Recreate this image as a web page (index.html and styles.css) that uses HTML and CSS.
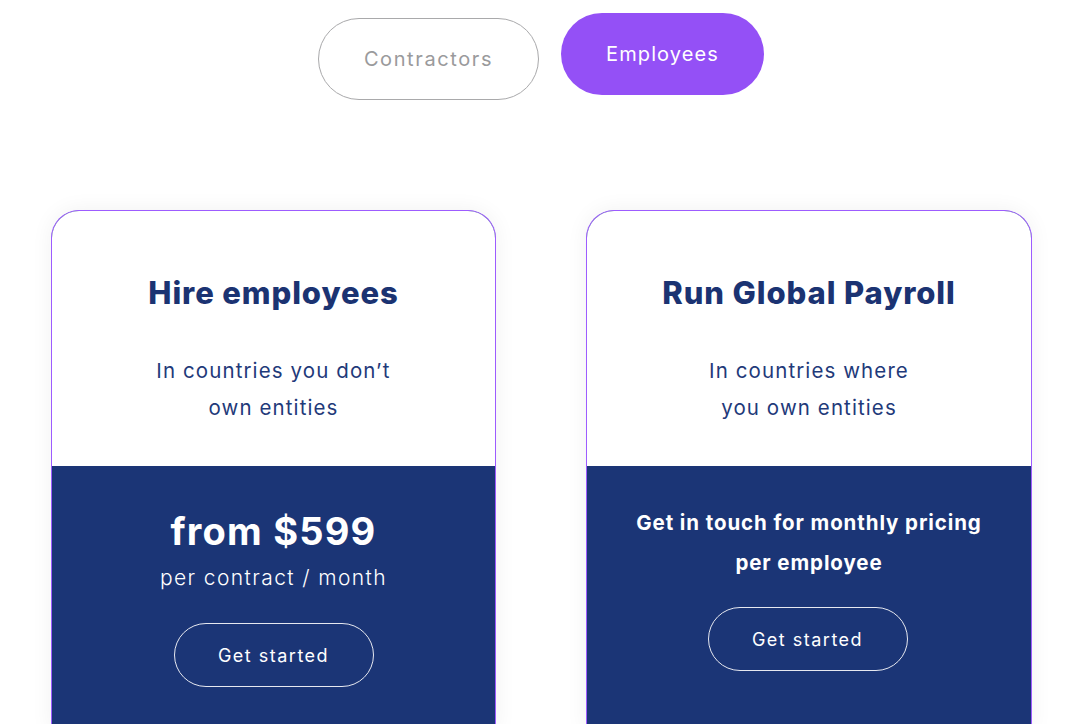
FILE: index.html
```html
<!DOCTYPE html>
<html lang="en">
<head>
<meta charset="utf-8">
<title>Pricing</title>
<link rel="stylesheet" href="styles.css">
</head>
<body>
<div class="toggle">
  <button class="tab tab-off">Contractors</button>
  <button class="tab tab-on">Employees</button>
</div>
<div class="cards">
  <div class="card">
    <div class="card-top">
      <h2 class="card-title">Hire employees</h2>
      <p class="card-sub">In countries you don’t<br>own entities</p>
    </div>
    <div class="card-bottom">
      <div class="price">from $599</div>
      <div class="price-unit">per contract / month</div>
      <button class="cta">Get started</button>
    </div>
  </div>
  <div class="card card-right">
    <div class="card-top">
      <h2 class="card-title">Run Global Payroll</h2>
      <p class="card-sub">In countries where<br>you own entities</p>
    </div>
    <div class="card-bottom card-bottom-alt">
      <div class="touch">Get in touch for monthly pricing<br>per employee</div>
      <button class="cta cta-alt">Get started</button>
    </div>
  </div>
</div>
</body>
</html>
```
FILE: styles.css
```css
html, body {
  margin: 0;
  padding: 0;
  background: #ffffff;
  font-family: "Inter", "Lato", sans-serif;
  height: 724px;
  overflow: hidden;
}

.toggle {
  display: flex;
  justify-content: center;
  align-items: flex-start;
  gap: 22px;
  padding-top: 13px;
  padding-left: 2px;
}

.tab {
  height: 82px;
  border-radius: 41px;
  font-family: "Inter", sans-serif;
  font-size: 20px;
  font-weight: 400;
  cursor: pointer;
}

.tab-off {
  width: 221px;
  margin-top: 5px;
  background: #ffffff;
  border: 1.5px solid #a9a9ab;
  color: #9a9a9c;
  letter-spacing: 1.6px;
}

.tab-on {
  width: 203px;
  background: #9450f6;
  border: none;
  color: #ffffff;
  letter-spacing: 1.1px;
}

.cards {
  display: grid;
  grid-template-columns: 445px 445px;
  column-gap: 91px;
  padding-left: 51px;
  margin-top: 110px;
}

.card {
  border: 1.5px solid #9d5cff;
  border-bottom: none;
  border-radius: 28px 28px 0 0;
  overflow: hidden;
  box-shadow: 0 0 22px rgba(0, 0, 0, 0.06);
  height: 520px;
  background: #1b3576;
}

.card-right {
  margin-left: -1px;
}

.card-top {
  background: #ffffff;
  height: 255px;
  text-align: center;
  padding-top: 64px;
  box-sizing: border-box;
}

.card-title {
  margin: 0;
  font-size: 31px;
  line-height: 36px;
  font-weight: 800;
  color: #1b3372;
  letter-spacing: 0.9px;
}

.card-sub {
  margin: 41px 0 0;
  font-size: 20.5px;
  line-height: 37px;
  font-weight: 400;
  color: #1f3a7a;
  letter-spacing: 1.1px;
}

.card-bottom {
  background: #1b3576;
  text-align: center;
  color: #ffffff;
  padding-top: 42px;
  display: flex;
  flex-direction: column;
  align-items: center;
}

.card-bottom-alt {
  padding-top: 37px;
}

.price {
  font-size: 38px;
  line-height: 46px;
  font-weight: 700;
  letter-spacing: 1.2px;
}

.price-unit {
  margin-top: 9px;
  font-size: 21px;
  line-height: 30px;
  font-weight: 300;
  letter-spacing: 1.4px;
}

.touch {
  font-size: 20.5px;
  line-height: 40px;
  font-weight: 700;
  letter-spacing: 0.9px;
}

.cta {
  margin-top: 30px;
  width: 200px;
  height: 64px;
  border-radius: 32px;
  border: 1.5px solid #e6e8f0;
  background: transparent;
  color: #ffffff;
  font-family: "Inter", sans-serif;
  font-size: 18px;
  font-weight: 400;
  letter-spacing: 1.5px;
  cursor: pointer;
}

.cta-alt {
  margin-top: 24px;
  margin-left: -3px;
}
```
